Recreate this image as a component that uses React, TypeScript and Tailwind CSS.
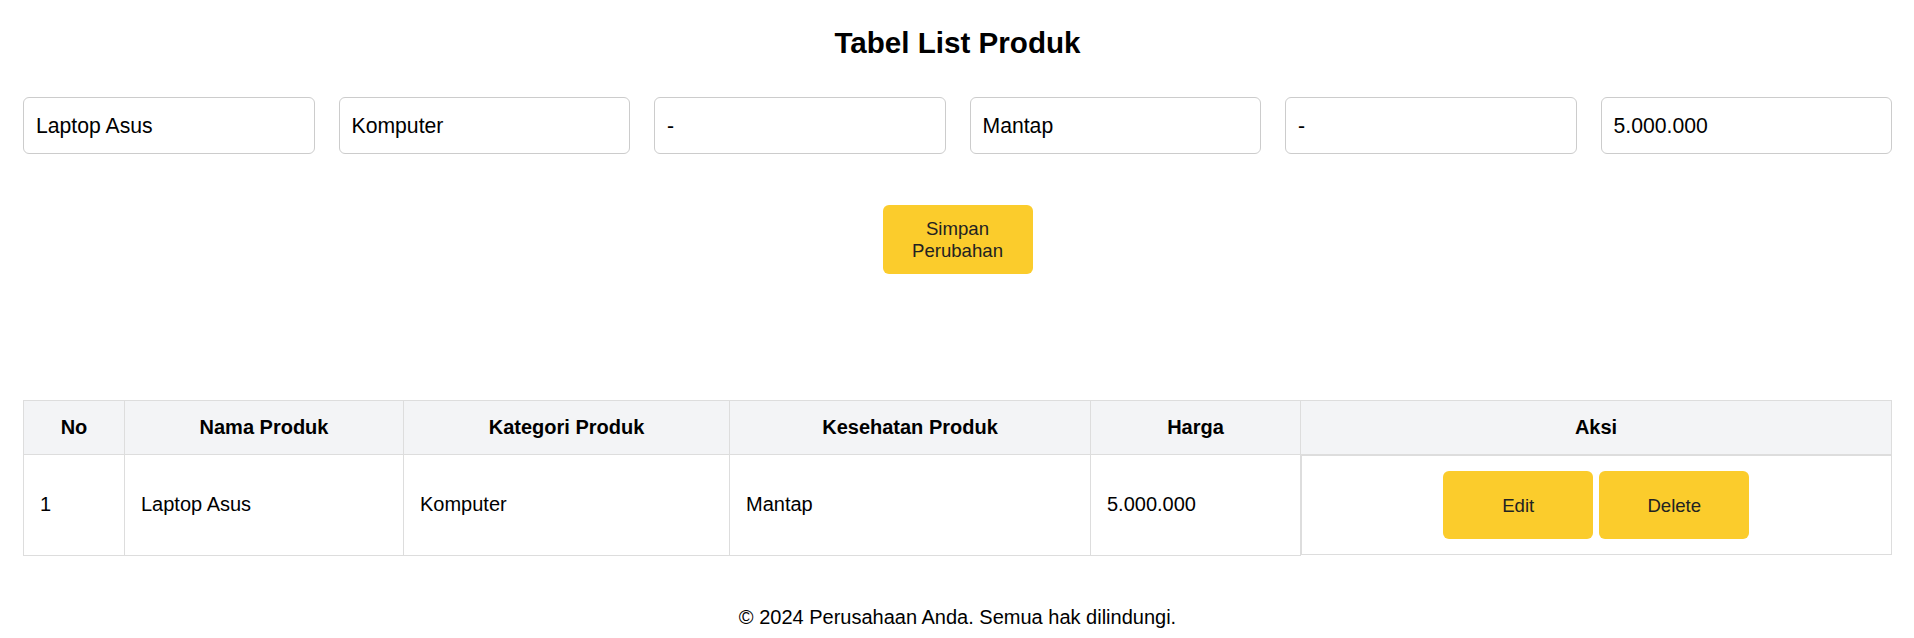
import { useState } from "react";

type Produk = {
  nama: string;
  kategori: string;
  kesehatan: string;
  harga: string;
};

const produkList: Produk[] = [
  { nama: "Laptop Asus", kategori: "Komputer", kesehatan: "Mantap", harga: "5.000.000" },
];

export default function App() {
  const [form, setForm] = useState(["Laptop Asus", "Komputer", "-", "Mantap", "-", "5.000.000"]);

  return (
    <div className="min-h-screen bg-white pl-[23px] pr-[22px] font-['Liberation_Sans',Arial,sans-serif] text-black">
      {/* Judul */}
      <h1 className="pt-[26px] text-center text-[29.6px] font-bold leading-[33px]">Tabel List Produk</h1>

      {/* Form edit */}
      <div className="mt-[38px] grid grid-cols-6 gap-6">
        {form.map((value, i) => (
          <input
            key={i}
            value={value}
            onChange={(e) => setForm(form.map((v, j) => (j === i ? e.target.value : v)))}
            className="h-[57px] w-full rounded-md border border-[#cccccc] px-3 text-[21.2px] text-black outline-none"
          />
        ))}
      </div>

      <div className="mt-[51px] flex justify-center">
        <button className="flex h-[69px] w-[150px] items-center justify-center rounded-md bg-[#fbcc2c] px-4 text-center text-[18.6px] leading-[22px] text-[#222]">
          Simpan Perubahan
        </button>
      </div>

      {/* Tabel */}
      <table className="mt-[126px] w-full table-fixed border-collapse text-[20px] leading-[23px]">
        <thead>
          <tr className="bg-[#f3f4f6]">
            <th className="w-[101px] border border-[#dddddd] px-4 py-[15px] font-bold">No</th>
            <th className="w-[279px] border border-[#dddddd] px-4 py-[15px] font-bold">Nama Produk</th>
            <th className="w-[326px] border border-[#dddddd] px-4 py-[15px] font-bold">Kategori Produk</th>
            <th className="w-[361px] border border-[#dddddd] px-4 py-[15px] font-bold">Kesehatan Produk</th>
            <th className="w-[210px] border border-[#dddddd] px-4 py-[15px] font-bold">Harga</th>
            <th className="border border-[#dddddd] px-4 py-[15px] font-bold">Aksi</th>
          </tr>
        </thead>
        <tbody>
          {produkList.map((p, i) => (
            <tr key={i}>
              <td className="border border-[#dddddd] px-4">{i + 1}</td>
              <td className="border border-[#dddddd] px-4">{p.nama}</td>
              <td className="border border-[#dddddd] px-4">{p.kategori}</td>
              <td className="border border-[#dddddd] px-4">{p.kesehatan}</td>
              <td className="border border-[#dddddd] px-4">{p.harga}</td>
              <td className="flex justify-center gap-1.5 border border-[#dddddd] px-4 py-[15px]">
                <button className="flex h-[68px] w-[150px] items-center justify-center rounded-md bg-[#fbcc2c] text-[18.6px] text-[#222]">
                  Edit
                </button>
                <button className="flex h-[68px] w-[150px] items-center justify-center rounded-md bg-[#fbcc2c] text-[18.6px] text-[#222]">
                  Delete
                </button>
              </td>
            </tr>
          ))}
        </tbody>
      </table>

      <footer className="mt-[50px] text-center text-[20px] leading-[23px]">
        © 2024 Perusahaan Anda. Semua hak dilindungi.
      </footer>
    </div>
  );
}
